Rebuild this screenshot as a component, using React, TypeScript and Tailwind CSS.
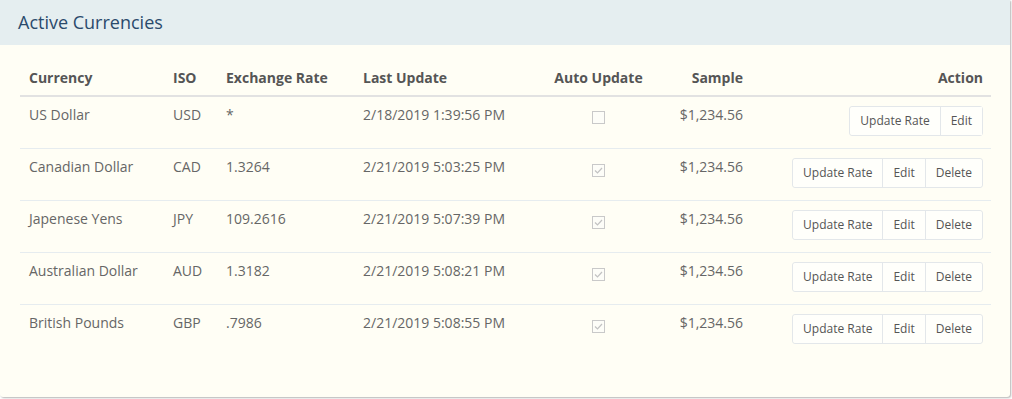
const rows = [
  { name: "US Dollar", iso: "USD", rate: "*", updated: "2/18/2019 1:39:56 PM", auto: false, sample: "$1,234.56", canDelete: false },
  { name: "Canadian Dollar", iso: "CAD", rate: "1.3264", updated: "2/21/2019 5:03:25 PM", auto: true, sample: "$1,234.56", canDelete: true },
  { name: "Japenese Yens", iso: "JPY", rate: "109.2616", updated: "2/21/2019 5:07:39 PM", auto: true, sample: "$1,234.56", canDelete: true },
  { name: "Australian Dollar", iso: "AUD", rate: "1.3182", updated: "2/21/2019 5:08:21 PM", auto: true, sample: "$1,234.56", canDelete: true },
  { name: "British Pounds", iso: "GBP", rate: ".7986", updated: "2/21/2019 5:08:55 PM", auto: true, sample: "$1,234.56", canDelete: true },
];

function CheckBox({ checked }: { checked: boolean }) {
  return (
    <span className="inline-flex h-[13px] w-[13px] items-center justify-center border border-[#c9c9c9] bg-[#fdfdf8]">
      {checked && (
        <svg width="11" height="11" viewBox="0 0 11 11" fill="none">
          <path d="M2 5.5 L4.5 8 L9 3" stroke="#c2c2c2" strokeWidth="1.2" />
        </svg>
      )}
    </span>
  );
}

function ActionButtons({ canDelete }: { canDelete: boolean }) {
  const btn = "h-[28px] px-[10px] text-[12px] text-[#555] bg-[#fffffb] border-[#e3e7ea]";
  return (
    <div className="inline-flex rounded-[3px] border border-[#e3e7ea]">
      <button className={`${btn} rounded-l-[3px]`}>Update Rate</button>
      <button className={`${btn} border-l`}>Edit</button>
      {canDelete && <button className={`${btn} border-l rounded-r-[3px]`}>Delete</button>}
    </div>
  );
}

export default function App() {
  return (
    <div className="w-[1012px] h-[399px] bg-white" style={{ fontFamily: '"Open Sans", sans-serif' }}>
      <div className="w-[1010px] h-[397px] flex flex-col rounded-b-[3px] shadow-[1px_1px_2px_rgba(0,0,0,0.3)] bg-[#fffef5]">
        <div className="h-[45px] bg-[#e5eef0] flex items-center px-[18px]">
          <h2 className="text-[18px] text-[#2a4a6c]">Active Currencies</h2>
        </div>
        <div className="px-[20px] pt-[16px]">
          <table className="w-[971px] table-fixed border-collapse text-[14px] text-[#666]">
            <thead>
              {/* header cells sit 1px high of centre */}
              <tr className="h-[35px] border-b-2 border-[#e2e2e2] text-[#555]">
                <th className="w-[153px] pl-[9px] pb-[2px] text-left font-bold">Currency</th>
                <th className="w-[53px] pb-[2px] text-left font-bold">ISO</th>
                <th className="w-[137px] pb-[2px] text-left font-bold">Exchange Rate</th>
                <th className="w-[182px] pb-[2px] text-left font-bold">Last Update</th>
                <th className="w-[107px] pb-[2px] text-center font-bold">Auto Update</th>
                <th className="w-[99px] pr-[8px] pb-[2px] text-right font-bold">Sample</th>
                <th className="w-[240px] pr-[8px] pb-[2px] text-right font-bold">Action</th>
              </tr>
            </thead>
            <tbody>
              {rows.map((r, i) => (
                <tr key={r.iso} className={`h-[52px] align-top ${i > 0 ? "border-t border-[#e6ecef]" : ""}`}>
                  <td className="pl-[9px] pt-[7px]">{r.name}</td>
                  <td className="pt-[7px]">{r.iso}</td>
                  <td className="pt-[7px]">{r.rate}</td>
                  <td className="pt-[7px]">{r.updated}</td>
                  <td className="pt-[11px] text-center">
                    <CheckBox checked={r.auto} />
                  </td>
                  <td className="pr-[8px] pt-[7px] text-right">{r.sample}</td>
                  <td className="pr-[8px] pt-[9px] text-right">
                    <ActionButtons canDelete={r.canDelete} />
                  </td>
                </tr>
              ))}
            </tbody>
          </table>
        </div>
      </div>
    </div>
  );
}
